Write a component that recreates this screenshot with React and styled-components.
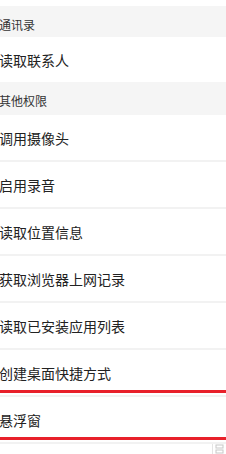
import React from 'react'
import styled, { createGlobalStyle } from 'styled-components'

const Global = createGlobalStyle`
  html, body {
    margin: 0;
    padding: 0;
    background: #ffffff;
    overflow: hidden;
  }
  body {
    font-family: "Noto Sans CJK SC", "Noto Sans", sans-serif;
  }
`

const Page = styled.div`
  width: 226px;
  height: 454px;
  display: flex;
  flex-direction: column;
  background: #fff;
  overflow: hidden;
`

const TopGap = styled.div`
  height: 6px;
  flex-shrink: 0;
  background: #fff;
`

const Header = styled.div`
  height: ${p => p.$h}px;
  flex-shrink: 0;
  box-sizing: border-box;
  padding-top: 12px;
  background: #f5f5f5;
  font-size: 12px;
  line-height: 14px;
  color: #333;
`

const Row = styled.div`
  height: 45px;
  display: flex;
  align-items: center;
  font-size: 14px;
  color: #222;
  background: #fff;
  border-top: ${p => (p.$first ? 'none' : '2px solid #f2f2f2')};
  box-shadow: ${p => (p.$marked ? 'inset 0 -2px 0 #fff, inset 0 -5px 0 #e8202a' : 'none')};
  flex-shrink: 0;
`

const Label = styled.span`
  margin-left: -1px;
  white-space: nowrap;
`

const HeadLabel = styled.span`
  margin-left: -1px;
`

const Tail = styled.div`
  border-top: 2px solid #f2f2f2;
  flex: 1;
  display: flex;
  justify-content: flex-end;
`

const Corner = styled.div`
  width: 13px;
  height: 12px;
  border-left: 1px solid #e4e4e4;
  display: flex;
  align-items: flex-start;
  justify-content: center;
`

const groups = [
  { title: '通讯录', h: 31, items: ['读取联系人'] },
  {
    title: '其他权限',
    h: 33,
    items: [
      '调用摄像头',
      '启用录音',
      '读取位置信息',
      '获取浏览器上网记录',
      '读取已安装应用列表',
      '创建桌面快捷方式',
      '悬浮窗',
    ],
  },
]

const marked = ['创建桌面快捷方式', '悬浮窗']

const App = () => {
  return (
    <Page>
      <Global />
      <TopGap />
      {groups.map(g => (
        <React.Fragment key={g.title}>
          <Header $h={g.h}>
            <HeadLabel>{g.title}</HeadLabel>
          </Header>
          {g.items.map((it, i) => (
            <Row key={it} $first={i === 0} $marked={marked.includes(it)}>
              <Label>{it}</Label>
            </Row>
          ))}
        </React.Fragment>
      ))}
      <Tail>
        <Corner>
          <svg width="9" height="10" viewBox="0 0 9 10">
            <rect x="1" y="1" width="7" height="3" fill="none" stroke="#c8c8c8" strokeWidth="1" />
            <rect x="1" y="6" width="7" height="3" fill="none" stroke="#c8c8c8" strokeWidth="1" />
          </svg>
        </Corner>
      </Tail>
    </Page>
  )
}

export default App
